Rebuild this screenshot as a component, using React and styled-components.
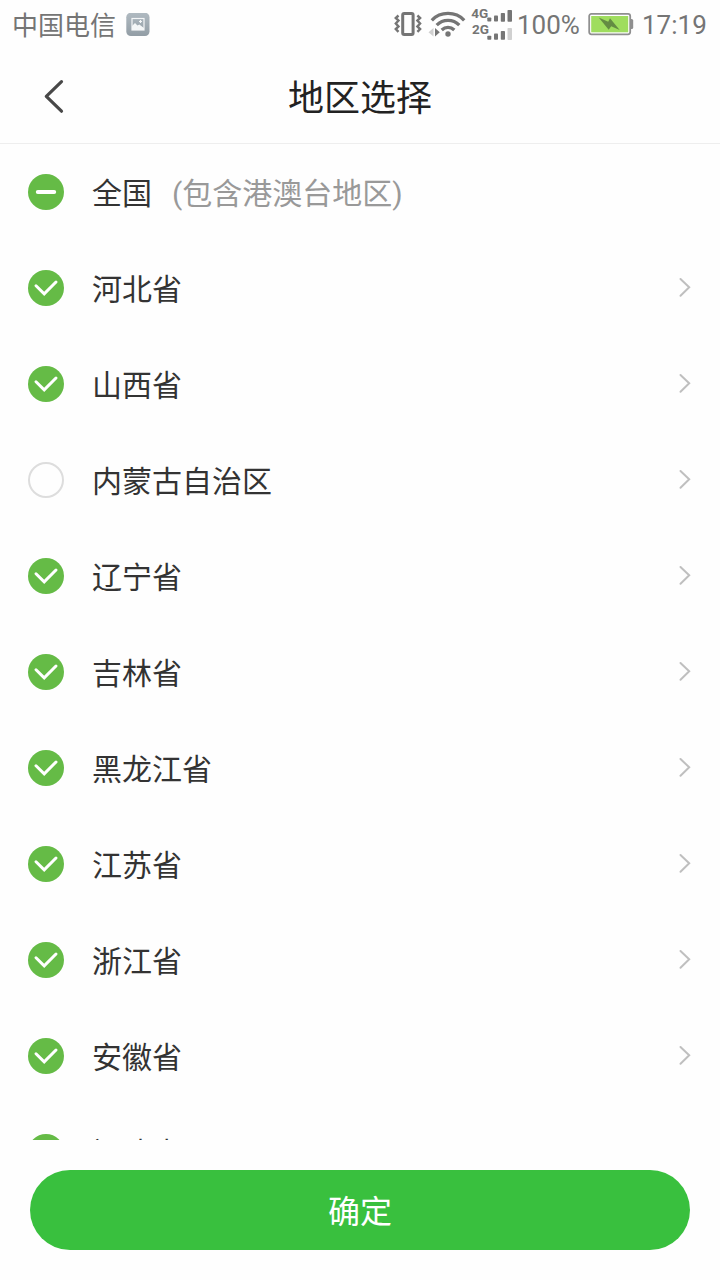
import styled, { createGlobalStyle } from 'styled-components';

const GlobalStyle = createGlobalStyle`
  * {
    box-sizing: border-box;
  }

  body {
    margin: 0;
    background: #fefefe;
    font-family: Roboto, 'Noto Sans CJK SC', sans-serif;
  }
`;

const Screen = styled.div`
  width: 720px;
  height: 1280px;
  display: flex;
  flex-direction: column;
  overflow: hidden;
  background: #fefefe;
`;

const StatusBar = styled.div`
  height: 50px;
  padding: 0 12px;
  display: flex;
  align-items: center;
  justify-content: space-between;
  color: #757575;
  font-size: 26px;
  line-height: 50px;
  white-space: nowrap;

  svg {
    display: block;
    flex: none;
  }
`;

const StatusGroup = styled.div`
  display: flex;
  align-items: center;
`;

const Carrier = styled.span`
  margin-right: 10px;
  height: 50px;
  line-height: 52px;
`;

const Percent = styled.span`
  width: 75px;
  padding-left: 4px;
  height: 50px;
  line-height: 51px;
`;

const Time = styled.span`
  width: 66px;
  margin-left: 8px;
  height: 50px;
  line-height: 51px;
`;

const Header = styled.header`
  height: 94px;
  padding: 0 36px;
  display: grid;
  grid-template-columns: 36px 1fr 36px;
  align-items: center;
  border-bottom: 1px solid #eeeeee;

  h1 {
    margin: 0;
    padding-top: 4px;
    color: #222;
    font-size: 36px;
    font-weight: 400;
    line-height: 52px;
    text-align: center;
  }
`;

const BackButton = styled.button`
  width: 36px;
  height: 44px;
  padding: 0;
  border: 0;
  background: none;

  svg {
    display: block;
  }
`;

const List = styled.ul`
  flex: 1;
  min-height: 0;
  margin: 0;
  padding: 0;
  list-style: none;
  overflow: hidden;
`;

const Row = styled.li`
  height: 96px;
  padding: 0 28px;
  display: flex;
  align-items: center;

  svg {
    display: block;
    flex: none;
  }
`;

const Name = styled.span`
  margin-left: 28px;
  padding-top: 4px;
  color: #333;
  font-size: 30px;
  line-height: 44px;
`;

const Note = styled.span`
  flex: 1;
  margin-left: 20px;
  padding-top: 4px;
  color: #999;
  font-size: 30px;
  line-height: 44px;
`;

const Footer = styled.footer`
  height: 140px;
  padding: 30px;
`;

const ConfirmButton = styled.button`
  display: block;
  width: 100%;
  height: 80px;
  padding: 0 0 2px;
  border: 0;
  border-radius: 40px;
  background: #39c03e;
  color: #fff;
  font-family: inherit;
  font-size: 32px;
`;

const regions = [
  { name: '全国', note: '(包含港澳台地区)', state: 'partial' },
  { name: '河北省', state: 'checked' },
  { name: '山西省', state: 'checked' },
  { name: '内蒙古自治区', state: 'empty' },
  { name: '辽宁省', state: 'checked' },
  { name: '吉林省', state: 'checked' },
  { name: '黑龙江省', state: 'checked' },
  { name: '江苏省', state: 'checked' },
  { name: '浙江省', state: 'checked' },
  { name: '安徽省', state: 'checked' },
  { name: '福建省', state: 'checked' },
];

function CheckIcon({ state }) {
  if (state === 'empty') {
    return (
      <svg width="36" height="36" viewBox="0 0 36 36">
        <circle cx="18" cy="18" r="17" fill="none" stroke="#ddd" strokeWidth="2" />
      </svg>
    );
  }

  return (
    <svg width="36" height="36" viewBox="0 0 36 36">
      <circle cx="18" cy="18" r="18" fill="#65bb46" />
      <path
        d={state === 'partial' ? 'M9.8 18H26.2' : 'M8 15.8L16.2 23.8L28 12'}
        fill="none"
        stroke="#fff"
        strokeWidth={state === 'partial' ? 4 : 3}
        strokeLinecap="round"
      />
    </svg>
  );
}

const Arrow = styled(({ className }) => (
  <svg className={className} width="14" height="22" viewBox="0 0 14 22">
    <path
      d="M2.5 2L11.2 10.3L2.5 18.7"
      fill="none"
      stroke="#bfbfbf"
      strokeWidth="2"
      strokeLinecap="round"
    />
  </svg>
))`
  margin-left: auto;
`;

function PictureIcon() {
  return (
    <svg width="24" height="24" viewBox="0 0 24 24">
      <defs>
        <linearGradient id="picture" x1="0" y1="0" x2="0" y2="1">
          <stop offset="0" stopColor="#b0bac1" />
          <stop offset="1" stopColor="#929da5" />
        </linearGradient>
      </defs>
      <rect x="0.3" y="-0.3" width="23.2" height="23.4" rx="4.5" fill="url(#picture)" />
      <rect x="6" y="5.5" width="12" height="11.5" fill="none" stroke="#f4f6f7" strokeWidth="1.2" />
      <path d="M6 13L9 10L11.5 12.5L13.3 11.5L18 15V17H6Z" fill="#f4f6f7" />
      <path d="M14.5 7V10M13 8.5H16" stroke="#f4f6f7" strokeWidth="1.2" />
    </svg>
  );
}

function SignalIcons() {
  return (
    <svg width="120" height="50" viewBox="393 0 120 50" fill="#757575">
      {/* vibrate */}
      <rect x="402.7" y="13.5" width="10.4" height="21" rx="1.5" fill="none" stroke="#757575" strokeWidth="3" />
      <path
        d="M398.5 15.5L395.8 18L398.5 20.5L395.8 23.5L398.5 26.5L395.8 29L398.5 31.8M417.4 15.5L420.1 18L417.4 20.5L420.1 23.5L417.4 26.5L420.1 29L417.4 31.8"
        fill="none"
        stroke="#757575"
        strokeWidth="2.4"
      />
      {/* wifi */}
      <path
        d="M431.8 20.3C440.5 11.2 455.5 11.2 464.2 20.3M436.7 25.2C443 18.8 453 18.8 459.3 25.2M441.7 30C445.4 26.4 450.6 26.4 454.3 30"
        fill="none"
        stroke="#757575"
        strokeWidth="3.3"
      />
      <circle cx="448" cy="34" r="2.7" />
      <path d="M433.5 28V36.5L428.5 32.2Z" fill="#d0d0d0" />
      <path d="M435 28V36.5L439.8 32.2Z" />
      {/* mobile networks */}
      <text x="471.3" y="18" fontSize="13.5" fontWeight="700">4G</text>
      <text x="472" y="34" fontSize="13.5" fontWeight="700">2G</text>
      <rect x="487.3" y="17.5" width="4" height="4" rx="0.8" />
      <rect x="494" y="15.5" width="4" height="6" rx="0.8" />
      <rect x="500.8" y="13" width="4.2" height="8.7" rx="0.8" />
      <rect x="507.5" y="10" width="4.5" height="11.7" rx="0.8" />
      <rect x="487.3" y="35.7" width="4" height="4" rx="0.8" />
      <rect x="494" y="33.5" width="4" height="6.2" rx="0.8" />
      <rect x="500.8" y="31" width="4.2" height="8.8" rx="0.8" />
      <rect x="507.5" y="28" width="4.5" height="12" rx="0.8" fill="#d0d0d0" />
    </svg>
  );
}

function BatteryIcon() {
  return (
    <svg width="46" height="24" viewBox="0 0 46 24">
      <rect x="1.2" y="0.9" width="41" height="20.4" rx="2.2" fill="#fff" stroke="#8f8f8f" strokeWidth="1.8" />
      <rect x="3.2" y="3" width="37" height="16.3" fill="#9fdd5e" />
      <path d="M42.9 6H43.7Q45.2 6 45.2 7.5V14.5Q45.2 16 43.7 16H42.9Z" fill="#8f8f8f" />
      <path d="M10.7 4.5L20.2 8.8L22 5.2L31.7 17L23.2 13.3L20.7 16.7Z" fill="#648b43" />
    </svg>
  );
}

export default function App() {
  return (
    <>
      <GlobalStyle />
      <Screen>
        <StatusBar>
          <StatusGroup>
            <Carrier>中国电信</Carrier>
            <PictureIcon />
          </StatusGroup>
          <StatusGroup>
            <SignalIcons />
            <Percent>100%</Percent>
            <BatteryIcon />
            <Time>17:19</Time>
          </StatusGroup>
        </StatusBar>
        <Header>
          <BackButton aria-label="返回">
            <svg width="36" height="44" viewBox="0 0 36 44">
              <path
                d="M25.5 6.7L10.3 21.3L25.5 36.2"
                fill="none"
                stroke="#484848"
                strokeWidth="3.2"
                strokeLinecap="round"
                strokeLinejoin="round"
              />
            </svg>
          </BackButton>
          <h1>地区选择</h1>
        </Header>
        <List>
          {regions.map((region) => (
            <Row key={region.name}>
              <CheckIcon state={region.state} />
              <Name>{region.name}</Name>
              {region.note ? <Note>{region.note}</Note> : <Arrow />}
            </Row>
          ))}
        </List>
        <Footer>
          <ConfirmButton>确定</ConfirmButton>
        </Footer>
      </Screen>
    </>
  );
}
